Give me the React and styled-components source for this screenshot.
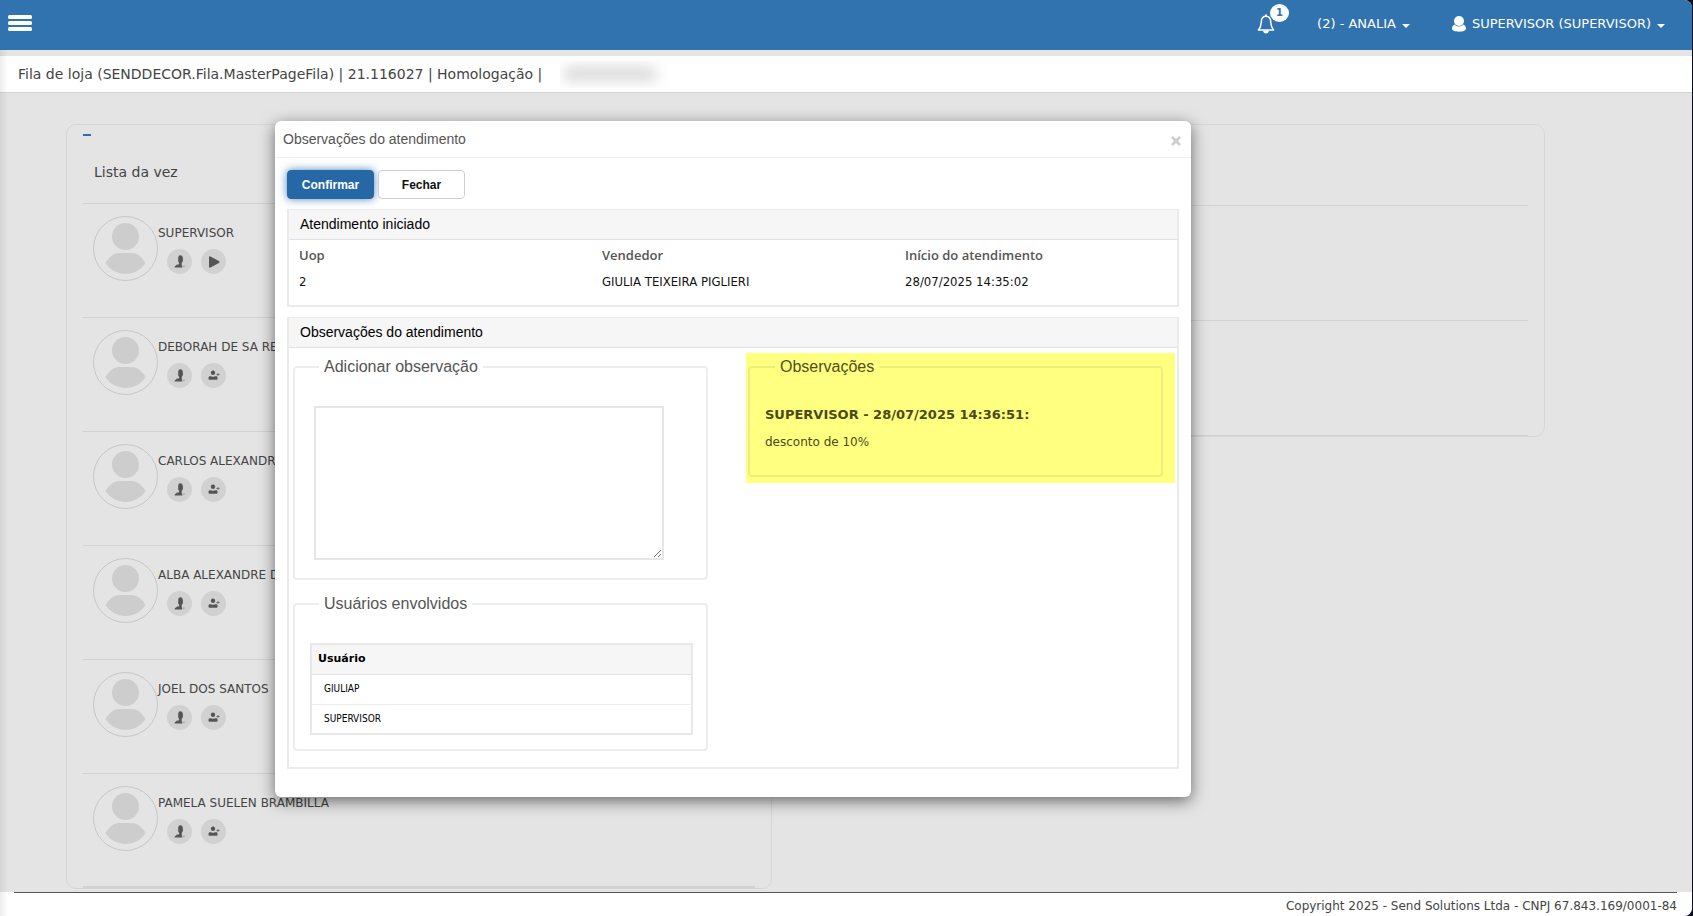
import React from 'react';
import styled, { createGlobalStyle } from 'styled-components';

const verdana = '"DejaVu Sans", Verdana, sans-serif';
const condensed = '"DejaVu Sans Condensed", "DejaVu Sans", sans-serif';
const arial = '"Liberation Sans", Arial, sans-serif';

const GlobalStyle = createGlobalStyle`
  *, *::before, *::after { box-sizing: border-box; }
  body {
    margin: 0;
    background: #0b0f1e;
    color: #444;
    font: 12px/18px ${verdana};
  }
  button { font: inherit; color: inherit; cursor: pointer; }
`;

const Page = styled.div`
  position: relative;
  display: flex;
  flex-direction: column;
  min-height: 100vh;
  margin-right: 1px;
  border-radius: 0 8px 8px 0;
  overflow: hidden;
  background: #e4e4e4;
`;

const TopBar = styled.header`
  display: flex;
  align-items: center;
  justify-content: space-between;
  height: 50px;
  padding: 0 27px 4px 8px;
  background: #3173af;
  color: #fff;
`;

const BarGroup = styled.nav`
  display: flex;
  align-items: center;
  gap: 42px;
  padding-top: 2px;
`;

const BarButton = styled.button`
  position: relative;
  display: flex;
  align-items: center;
  gap: 6px;
  padding: 0;
  border: 0;
  background: none;
  font-size: 13px;
`;

const Badge = styled.span`
  position: absolute;
  left: 13px;
  top: -10px;
  width: 19px;
  height: 18px;
  border-radius: 50%;
  background: #fff;
  color: #3173af;
  font: bold 10px/18px ${verdana};
  text-align: center;
`;

const Caret = styled.span`
  margin-top: 3px;
  border: 4px solid transparent;
  border-top-color: #fff;
  border-bottom: 0;
`;

const TitleBar = styled.div`
  display: flex;
  align-items: center;
  gap: 18px;
  height: 37px;
  margin-top: 6px;
  padding: 0 18px;
  border-bottom: 1px solid #d4d4d4;
  background: #fff;
`;

const PageTitle = styled.h1`
  margin: 0;
  font: 14px/20px ${verdana};
`;

const Redacted = styled.span`
  display: flex;
  align-items: center;
  width: 108px;
  height: 27px;
  overflow: hidden;

  &::before {
    content: '';
    width: 92px;
    height: 14px;
    margin-left: 4px;
    background: #d8d8d8;
    filter: blur(7px);
  }
`;

const Body = styled.div`
  position: relative;
  flex: 1;
  display: flex;
  flex-direction: column;
`;

const EdgeShade = styled.div`
  position: absolute;
  inset: 50px auto 0 0;
  width: 8px;
  background: linear-gradient(to right, rgba(0, 0, 0, 0.07), transparent);
  pointer-events: none;
`;

const Main = styled.main`
  flex: 1;
  display: grid;
  grid-template-columns: 1fr 1fr;
  gap: 68px;
  align-items: start;
  padding: 31px 147px 3px 66px;
`;

const ListPanel = styled.section`
  padding: 0 16px;
  border: 1px solid #d6d6d6;
  border-radius: 10px;
`;

const PanelTop = styled.div`
  height: 79px;
  padding-top: 9px;
  border-bottom: 1px solid #d2d2d2;
`;

const Collapse = styled.button`
  display: block;
  width: 8px;
  height: 2px;
  padding: 0;
  border: 0;
  background: #2a6ead;
`;

const ListTitle = styled.h2`
  margin: 0;
  padding: 26px 0 0 11px;
  font: 14px/20px ${verdana};
`;

const People = styled.ul`
  margin: 0;
  padding: 0;
  list-style: none;
`;

const Person = styled.li`
  display: flex;
  height: 114px;
  padding: 12px 0 0 10px;
  border-bottom: 1px solid #d2d2d2;
  white-space: nowrap;

  &:last-child { border-bottom-width: 2px; }
`;

const PersonInfo = styled.div`
  padding-top: 8px;
`;

const Actions = styled.div`
  display: flex;
  gap: 9px;
  padding: 7px 0 0 9px;
`;

const RoundButton = styled.button`
  display: grid;
  place-items: center;
  width: 25px;
  height: 25px;
  padding: 0;
  border: 0;
  border-radius: 50%;
  background: #d1d1d1;
  color: #555;
`;

const EmptyRow = styled.div`
  height: ${(p) => p.$height}px;
  border-bottom: 1px solid #d2d2d2;
`;

const Footer = styled.footer`
  margin: 0;
  padding: 0 15px 0 14px;
  background: #fff;
`;

const FooterText = styled.p`
  margin: 0;
  padding-top: 4px;
  height: 24px;
  border-top: 1px solid #555;
  text-align: right;
`;

const Overlay = styled.div`
  position: absolute;
  inset: 0;
  padding: 121px 0 0 275px;
`;

const Modal = styled.section`
  width: min(916px, 100%);
  border-radius: 6px;
  background: #fff;
  box-shadow: 0 4px 16px rgba(0, 0, 0, 0.55);
  overflow: hidden;
`;

const ModalHeader = styled.header`
  display: flex;
  align-items: center;
  justify-content: space-between;
  height: 37px;
  padding: 0 10px 0 8px;
  border-bottom: 1px solid #f0f0f0;
`;

const ModalTitle = styled.h2`
  margin: 0;
  font: 14px/20px ${arial};
  color: #555;
`;

const CloseButton = styled.button`
  display: grid;
  margin-top: 4px;
  padding: 0;
  border: 0;
  background: none;
  color: #ccc;
`;

const ModalBody = styled.div`
  display: flex;
  flex-direction: column;
  gap: 10px;
  padding: 12px 12px 28px;
`;

const Buttons = styled.div`
  display: flex;
  gap: 4px;
`;

const ActionButton = styled.button`
  width: 87px;
  height: 29px;
  padding: 0;
  border: 1px solid ${(p) => (p.$primary ? '#2568a5' : '#d0d0d0')};
  border-radius: 4px;
  background: ${(p) => (p.$primary ? '#2568a5' : '#fff')};
  box-shadow: ${(p) => (p.$primary ? '0 0 8px rgba(37, 104, 165, 0.8)' : 'none')};
  color: ${(p) => (p.$primary ? '#fff' : '#111')};
  font: bold 12px/16px ${arial};
`;

const Card = styled.section`
  border: 2px solid #ebebeb;
  border-top-width: 1px;
`;

const CardTitle = styled.h3`
  margin: 0;
  padding: 0 11px;
  border-bottom: 1px solid #e2e2e2;
  background: #f6f6f6;
  color: #000;
  font: 14px/29px ${arial};
`;

const Facts = styled.dl`
  display: grid;
  grid-template-columns: repeat(3, 303px);
  margin: 0;
  padding: 5px 10px 13px;
`;

const Term = styled.dt`
  color: #555;
  font: 600 13px/20px "Open Sans", sans-serif;
`;

const Detail = styled.dd`
  margin: 0;
  padding-top: 7px;
  color: #111;
  font: 13px/20px ${condensed};
`;

const Columns = styled.div`
  display: grid;
  grid-template-columns: 1fr 1fr;
  gap: 40px;
  align-items: start;
  padding: 9px 14px 16px 4px;
`;

const Stack = styled.div`
  display: flex;
  flex-direction: column;
  gap: 14px;
`;

const Group = styled.fieldset`
  min-width: 0;
  margin: 0;
  padding: ${(p) => p.$pad};
  border: 2px solid #ededed;
  border-radius: 4px;
`;

const Legend = styled.legend`
  margin-left: ${(p) => p.$indent}px;
  padding: 0 5px;
  color: #555;
  font: 16px/20px ${arial};
`;

const Highlight = styled.div`
  margin: -4px -12px 0 -2px;
  padding: 4px 12px 6px 2px;
  background: #ffff80;
  color: #4a4a1a;

  ${Group} { border-color: #eeee7c; }
  ${Legend} { color: #4f4f20; }
`;

const NoteBox = styled.textarea`
  display: block;
  width: 350px;
  max-width: 100%;
  height: 154px;
  padding: 4px;
  border: 2px solid #e6e6e6;
  outline: 0;
  background: #fff;
  font: 13px/18px ${arial};
`;

const UserTable = styled.table`
  width: 100%;
  border: 2px solid #e8e8e8;
  border-collapse: collapse;
  text-align: left;
  color: #000;
`;

const HeadCell = styled.th`
  height: 30px;
  padding: 0 6px;
  border-bottom: 1px solid #e2e2e2;
  background: #f6f6f6;
  font: bold 11px/16px ${verdana};
`;

const Cell = styled.td`
  height: 30px;
  padding: 0 12px;
  border-bottom: 1px solid #eee;
  font: 10px/16px ${condensed};
`;

const NoteAuthor = styled.p`
  margin: 0;
  font: bold 13px/18px ${verdana};
`;

const NoteText = styled.p`
  margin: 0;
  padding-top: 9px;
`;

const MenuIcon = () => (
  <svg width="24" height="16" viewBox="0 0 24 16" fill="#fff" aria-hidden="true">
    <rect width="24" height="4" rx="1.500" />
    <rect y="6" width="24" height="4" rx="1.500" />
    <rect y="12" width="24" height="4" rx="1.500" />
  </svg>
);

const BellIcon = () => (
  <svg width="18" height="20" viewBox="0 0 18 20" aria-hidden="true">
    <path d="M9 2.2C5.800 2.200 4.500 4.600 4.300 7.500C4.100 11 3.800 13.400 1.400 16H16.600C14.200 13.400 13.900 11 13.700 7.500C13.500 4.600 12.200 2.200 9 2.200Z" fill="none" stroke="#fff" strokeWidth="1.5" strokeLinejoin="round" />
    <path d="M8 .5H10V3H8ZM6 16.500H12C11.700 18.500 10.600 19.500 9 19.500C7.400 19.500 6.300 18.500 6 16.500Z" fill="#fff" />
  </svg>
);

const UserIcon = () => (
  <svg width="14" height="16" viewBox="0 0 14 16" fill="#fff" aria-hidden="true">
    <ellipse cx="7" cy="5" rx="5" ry="5" />
    <path d="M2.600 8.500C4.800 11 9.200 11 11.400 8.500C13.200 9.300 14 10.800 14 12.600C14 14.600 11.500 15.700 7 15.700C2.500 15.700 0 14.600 0 12.600C0 10.800 .8 9.300 2.600 8.500Z" />
  </svg>
);

const Avatar = () => (
  <svg width="65" height="65" viewBox="0 0 65 65" aria-hidden="true">
    <circle cx="32.500" cy="32.500" r="32" fill="none" stroke="#c6c6c6" />
    <circle cx="32.500" cy="20.500" r="13.500" fill="#cdcdcd" />
    <path d="M12.500 47C16 41 21 37 26 37H39C44 37 49 41 52.500 47C48 54 40.500 58 32.500 58C24.500 58 17 54 12.500 47Z" fill="#cdcdcd" />
  </svg>
);

const AttendIcon = () => (
  <svg width="13" height="13" viewBox="0 0 13 13" fill="currentColor" aria-hidden="true">
    <path d="M7.300 .3C9.100 .3 9.900 1.800 9.900 3.800C9.900 5.200 10.200 6.400 9.300 7.100C8.800 7.600 8.700 8.200 8.700 9.200C8.700 10.300 9.300 11 9.300 12.500H1.800C1.400 11.200 2 10.700 3.200 10.400C3.800 10.300 3.300 9.600 4 9.600C5 9.700 5.900 9.800 6.100 8.800C6.200 8 6 7.400 5.500 6.900C4.900 6.200 5.200 5 5.200 3.800C5.200 1.700 5.600 .3 7.300 .3Z" />
    <circle cx="10.900" cy="11.300" r="1" opacity="0.3" />
  </svg>
);

const PlayIcon = () => (
  <svg width="12" height="12" viewBox="0 0 12 12" fill="currentColor" aria-hidden="true">
    <path d="M1 1.300C1 .3 1.700 .1 2.500 .5L10.900 5.100C11.600 5.500 11.600 6.500 10.900 6.900L2.500 11.500C1.700 11.900 1 11.700 1 10.700Z" />
  </svg>
);

const AddUserIcon = () => (
  <svg width="12" height="11" viewBox="0 0 12 11" fill="currentColor" aria-hidden="true">
    <circle cx="5" cy="2.700" r="2.200" />
    <path d="M1.800 6C3.500 7 6.500 7 8.200 6C9.300 6.400 9.600 7.300 9.600 8.400C9.600 9.400 9 9.800 8 9.800H2C1 9.800 .5 9.400 .5 8.400C.5 7.300 .8 6.400 1.800 6Z" />
    <path d="M9.500 3H10.500V4H11.600V5H10.500V6H9.500V5H8.400V4H9.500Z" opacity="0.75" />
  </svg>
);

const CloseIcon = () => (
  <svg width="10" height="10" viewBox="0 0 10 10" stroke="currentColor" strokeWidth="2.600" aria-hidden="true">
    <path d="M1 1L9 9M9 1L1 9" />
  </svg>
);

const people = [
  { name: 'SUPERVISOR', active: true },
  { name: 'DEBORAH DE SA RE' },
  { name: 'CARLOS ALEXANDRE' },
  { name: 'ALBA ALEXANDRE D' },
  { name: 'JOEL DOS SANTOS' },
  { name: 'PAMELA SUELEN BRAMBILLA' },
];

const users = ['GIULIAP', 'SUPERVISOR'];

export default function App() {
  return (
    <>
      <GlobalStyle />
      <Page>
        <TopBar>
          <BarButton aria-label="Menu"><MenuIcon /></BarButton>
          <BarGroup>
            <BarButton aria-label="Notificações"><BellIcon /><Badge>1</Badge></BarButton>
            <BarButton>(2) - ANALIA<Caret /></BarButton>
            <BarButton><UserIcon />SUPERVISOR (SUPERVISOR)<Caret /></BarButton>
          </BarGroup>
        </TopBar>

        <Body>
          <TitleBar>
            <PageTitle>Fila de loja (SENDDECOR.Fila.MasterPageFila) | 21.116027 | Homologação |</PageTitle>
            <Redacted />
          </TitleBar>

          <Main>
            <ListPanel>
              <PanelTop>
                <Collapse aria-label="Recolher" />
                <ListTitle>Lista da vez</ListTitle>
              </PanelTop>
              <People>
                {people.map((p) => (
                  <Person key={p.name}>
                    <Avatar />
                    <PersonInfo>
                      {p.name}
                      <Actions>
                        <RoundButton aria-label="Atendimento"><AttendIcon /></RoundButton>
                        <RoundButton aria-label={p.active ? 'Iniciar' : 'Adicionar'}>
                          {p.active ? <PlayIcon /> : <AddUserIcon />}
                        </RoundButton>
                      </Actions>
                    </PersonInfo>
                  </Person>
                ))}
              </People>
            </ListPanel>
            <ListPanel>
              <EmptyRow $height={81} />
              <EmptyRow $height={115} />
              <EmptyRow $height={115} />
            </ListPanel>
          </Main>

          <Footer>
            <FooterText>Copyright 2025 - Send Solutions Ltda - CNPJ 67.843.169/0001-84</FooterText>
          </Footer>
        </Body>
        <EdgeShade />

        <Overlay>
          <Modal role="dialog" aria-labelledby="modal-title">
            <ModalHeader>
              <ModalTitle id="modal-title">Observações do atendimento</ModalTitle>
              <CloseButton aria-label="Fechar janela"><CloseIcon /></CloseButton>
            </ModalHeader>
            <ModalBody>
              <Buttons>
                <ActionButton $primary>Confirmar</ActionButton>
                <ActionButton>Fechar</ActionButton>
              </Buttons>

              <Card>
                <CardTitle>Atendimento iniciado</CardTitle>
                <Facts>
                  <div><Term>Uop</Term><Detail>2</Detail></div>
                  <div><Term>Vendedor</Term><Detail>GIULIA TEIXEIRA PIGLIERI</Detail></div>
                  <div><Term>Início do atendimento</Term><Detail>28/07/2025 14:35:02</Detail></div>
                </Facts>
              </Card>

              <Card>
                <CardTitle>Observações do atendimento</CardTitle>
                <Columns>
                  <Stack>
                    <Group $pad="29px 40px 18px 19px">
                      <Legend $indent={5} id="note-label">Adicionar observação</Legend>
                      <NoteBox aria-labelledby="note-label" />
                    </Group>
                    <Group $pad="29px 13px 14px 15px">
                      <Legend $indent={9}>Usuários envolvidos</Legend>
                      <UserTable>
                        <thead><tr><HeadCell scope="col">Usuário</HeadCell></tr></thead>
                        <tbody>
                          {users.map((u) => <tr key={u}><Cell>{u}</Cell></tr>)}
                        </tbody>
                      </UserTable>
                    </Group>
                  </Stack>
                  <Highlight>
                    <Group $pad="29px 15px 24px">
                      <Legend $indent={10}>Observações</Legend>
                      <NoteAuthor>SUPERVISOR - 28/07/2025 14:36:51:</NoteAuthor>
                      <NoteText>desconto de 10%</NoteText>
                    </Group>
                  </Highlight>
                </Columns>
              </Card>
            </ModalBody>
          </Modal>
        </Overlay>
      </Page>
    </>
  );
}
